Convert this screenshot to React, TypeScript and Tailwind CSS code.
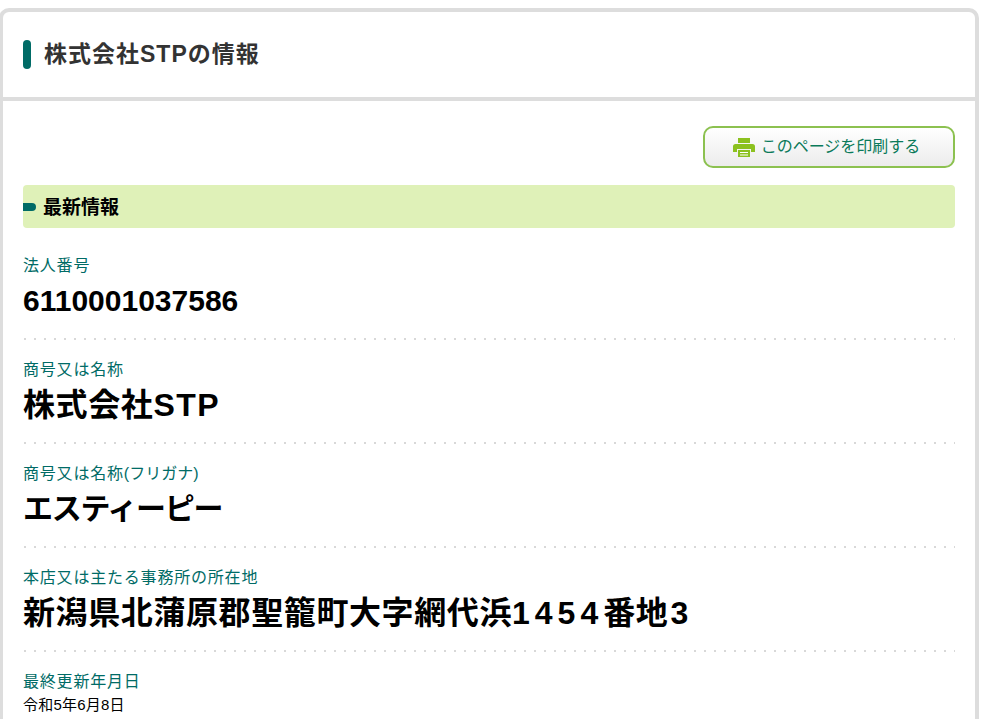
import type { ReactNode } from "react";

const FONT = "font-['Liberation_Sans','Noto_Sans_CJK_JP',sans-serif]";

function Field({ label, children, small, large }: { label: ReactNode; children: ReactNode; small?: boolean; large?: boolean }) {
  return (
    <div className="pt-[18px]">
      <div className="text-[16px] leading-[24px] tracking-[0.8px] text-[#006b66]">{label}</div>
      {small ? (
        <div className="-mt-px text-[15px] leading-[24px] tracking-[0.2px] text-black">{children}</div>
      ) : (
        <>
          <div className={large ? "mt-[4px] whitespace-nowrap text-[32px] leading-[38px] font-bold text-black" : "mt-[4px] whitespace-nowrap text-[30px] leading-[38px] font-bold text-black"}>{children}</div>
          <div className="mt-[18px] h-[2px] bg-[radial-gradient(circle,#d8d8d8_1px,transparent_1px)] bg-[length:10px_2px] bg-[position:-3px_0]" />
        </>
      )}
    </div>
  );
}

function PrinterIcon() {
  return (
    <svg width="22" height="19" viewBox="0 0 22 19" fill="#8cc11f" className="shrink-0">
      <path d="M5 0h12v5H5z" />
      <path d="M2.5 6h17A2.5 2.5 0 0 1 22 8.500V14h-4v-3H4v3H0V8.500A2.500 2.500 0 0 1 2.500 6z" />
      <path d="M5 12h12v7H5z" />
      <rect x="7" y="14" width="8" height="1" fill="#fff" />
      <rect x="7" y="16.500" width="8" height="1" fill="#fff" />
    </svg>
  );
}

export default function App() {
  return (
    <div className={`${FONT} h-[719px] w-[987px] overflow-hidden bg-white pt-2`}>
      <div className="-ml-px w-[980px] rounded-t-[10px] border-[4px] border-b-0 border-[#dddddd] pb-10">
        <div className="box-content flex h-[85px] items-center gap-[13px] border-b-[4px] border-[#dddddd] px-[20px]">
          <span className="h-[29px] w-[8px] rounded-[4px] bg-[#006b66]" />
          <h1 className="text-[23px] font-bold tracking-[1px] text-[#333333]">株式会社STPの情報</h1>
        </div>
        <div className="px-[20px] pt-[25px]">
          <div className="flex justify-end">
            <button className="flex h-[42px] w-[252px] items-center justify-center gap-[6px] rounded-[10px] border-2 border-[#8cc150] bg-gradient-to-b from-white to-[#ececec] pr-[5px] text-[16px] text-[#0a7a5a]">
              <PrinterIcon />
              このページを印刷する
            </button>
          </div>
          <div className="relative mt-[17px] flex h-[43px] items-center rounded-[4px] bg-[#dff1b8] pl-5 pt-[3px] text-[19px] font-bold text-black">
            <span className="absolute left-0 top-[18px] h-[8px] w-[13px] rounded-r-[4px] bg-[#006b66]" />
            最新情報
          </div>
          <div className="pt-[8px]">
            <Field label="法人番号">6110001037586</Field>
            <Field label="商号又は名称" large>
              <span className="tracking-[0.6px]">株式会社</span>
              <span className="tracking-[1.5px]">STP</span>
            </Field>
            <Field
              label={
                <>
                  商号又は名称<span className="tracking-normal">(フリガナ)</span>
                </>
              }
            >
              <span className="tracking-[-1.3px]">エスティーピー</span>
            </Field>
            <Field label="本店又は主たる事務所の所在地" large>
              <span className="tracking-[0.6px]">新潟県北蒲原郡聖籠町大字網代浜</span>
              <span className="tracking-[5px]">1454</span>
              <span className="tracking-[0.6px]">番地</span>
              <span className="ml-[2px]">3</span>
            </Field>
            <Field label="最終更新年月日" small>
              令和5年6月8日
            </Field>
          </div>
        </div>
      </div>
    </div>
  );
}
